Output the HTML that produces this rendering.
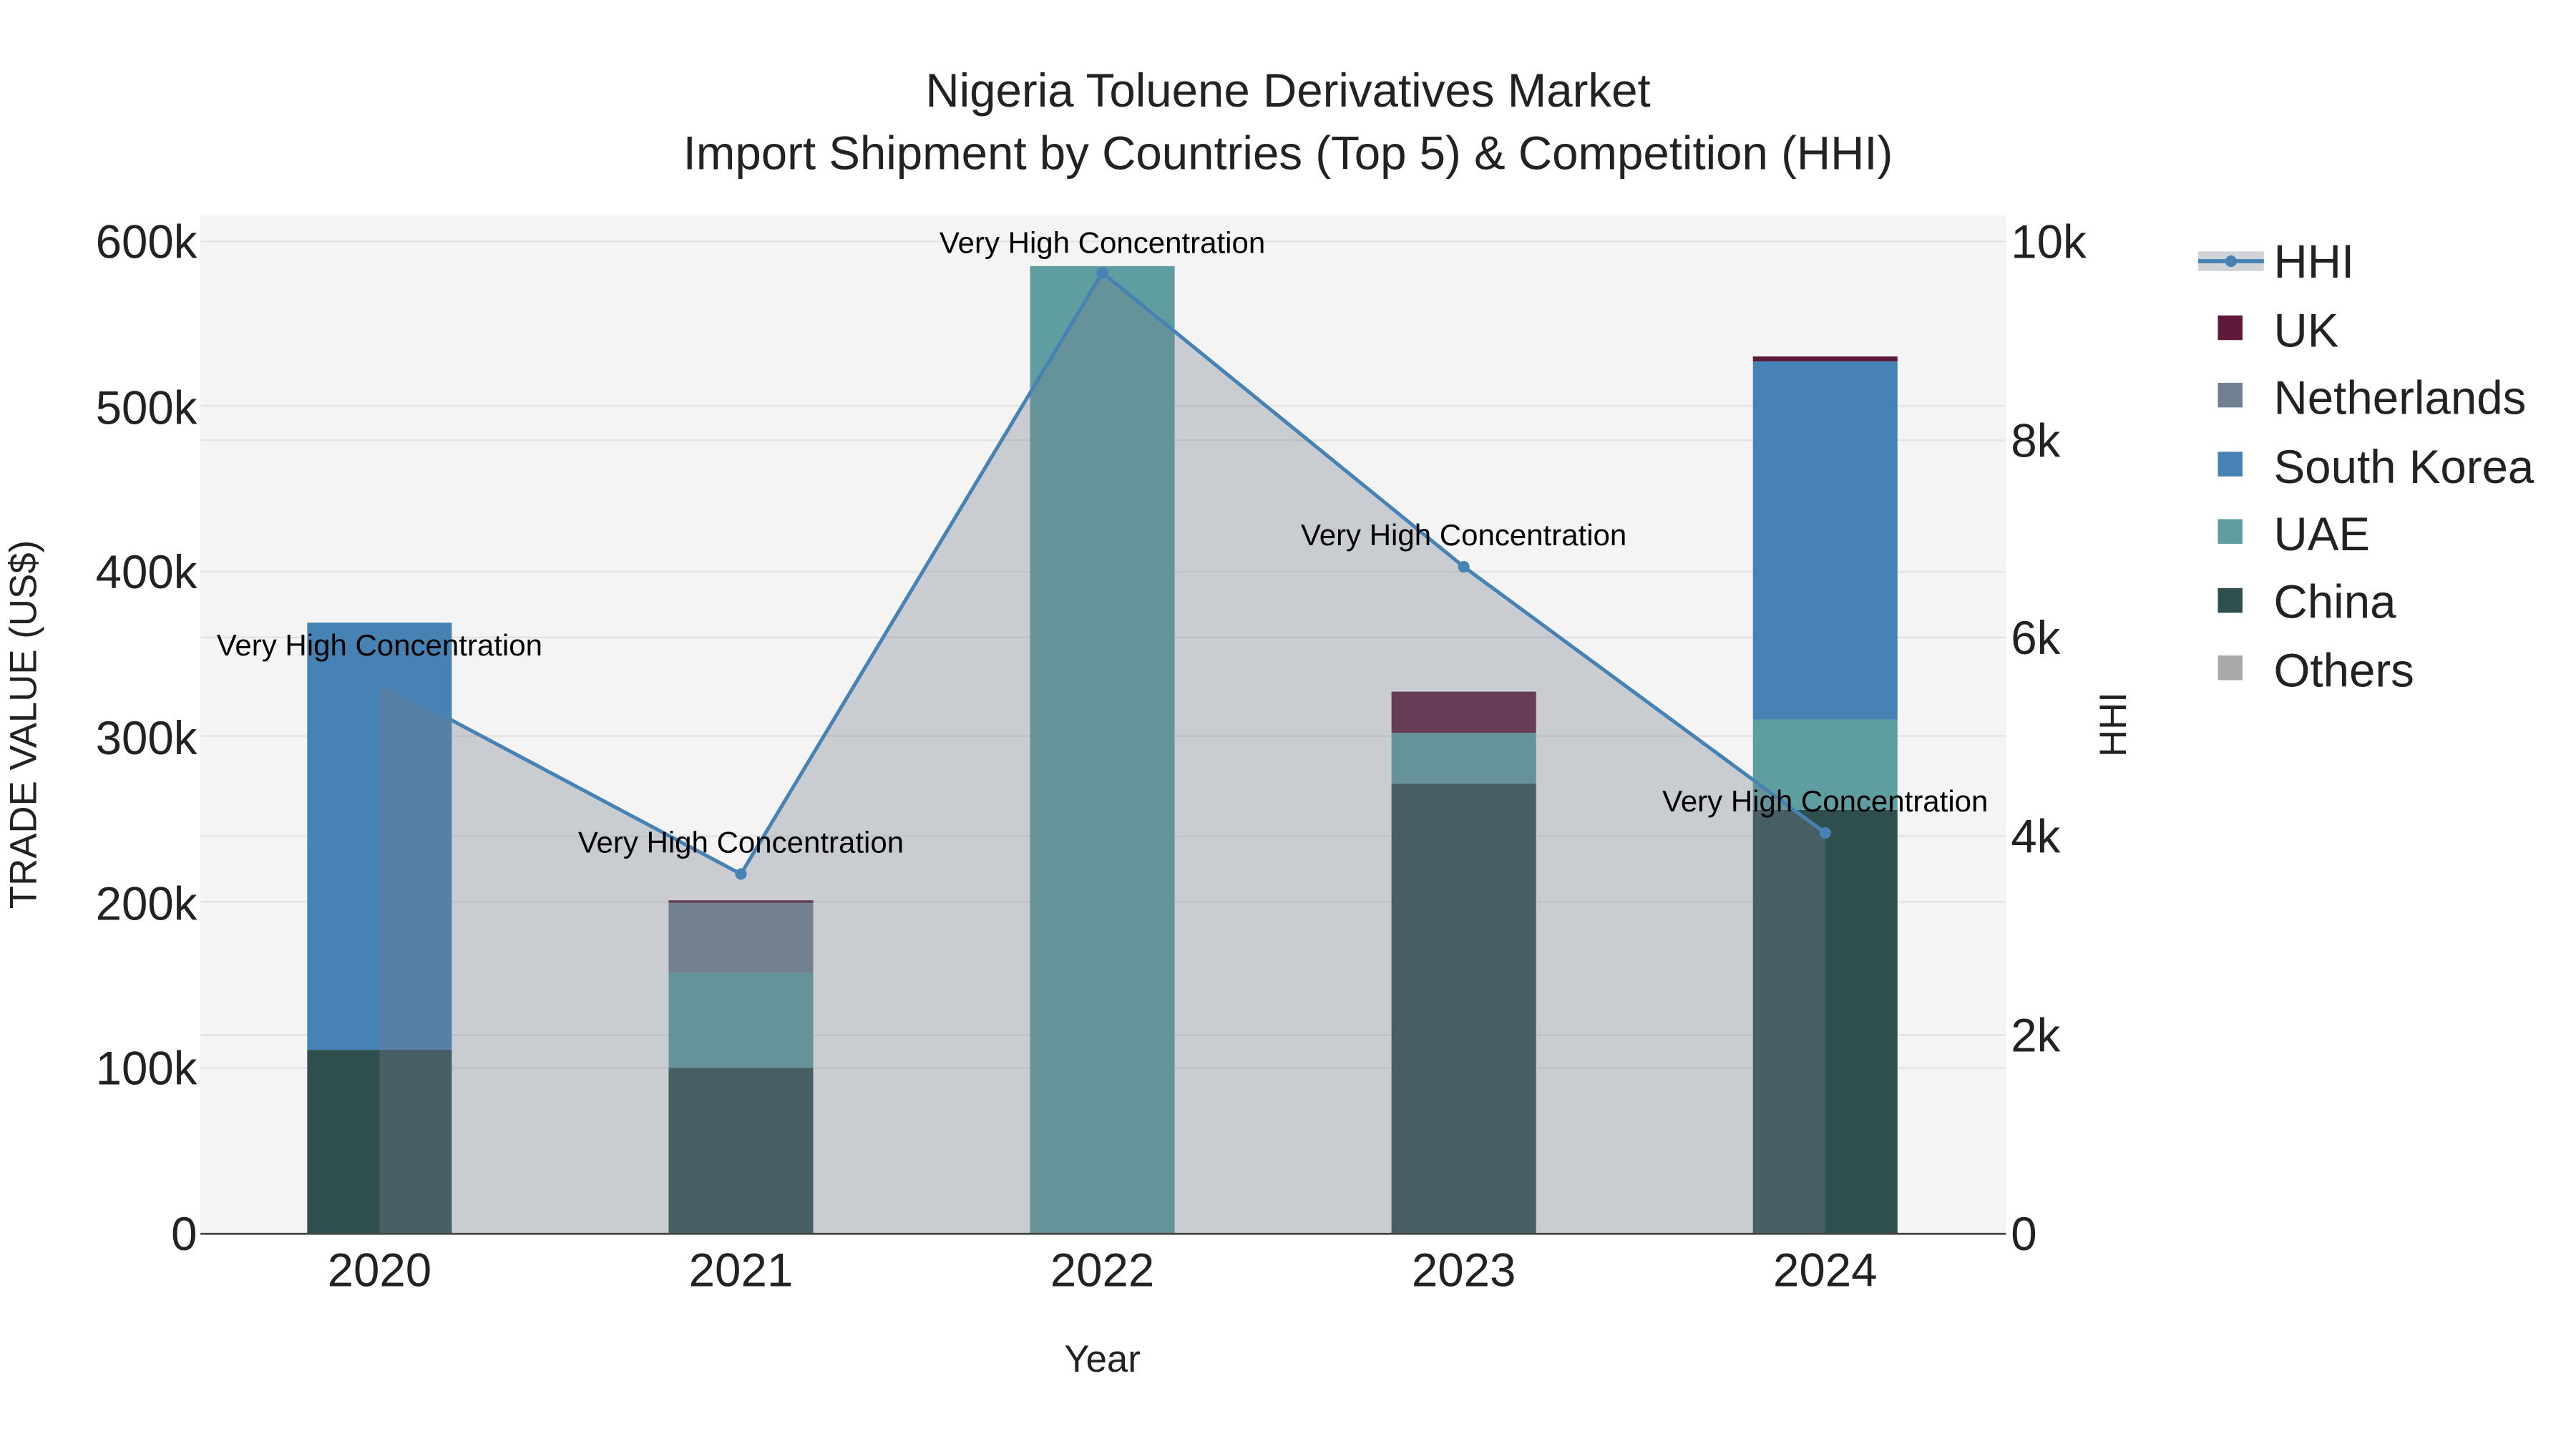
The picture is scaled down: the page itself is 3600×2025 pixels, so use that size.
<!DOCTYPE html>
<html><head><meta charset="utf-8"><style>
html,body{margin:0;padding:0;background:#fff;}
svg{display:block;}
text{font-family:"Liberation Sans",sans-serif;}
</style></head><body>
<svg width="3600" height="2025" viewBox="0 0 1568 882" xmlns="http://www.w3.org/2000/svg">
<rect width="1568" height="882" fill="#fff"/>
<rect x="122" y="131" width="1099" height="620" fill="#f4f4f4"/>
<g stroke="#e2e2e2" stroke-width="1">
<line x1="122" x2="1221" y1="650" y2="650"/><line x1="122" x2="1221" y1="549" y2="549"/>
<line x1="122" x2="1221" y1="448" y2="448"/><line x1="122" x2="1221" y1="348" y2="348"/>
<line x1="122" x2="1221" y1="247" y2="247"/><line x1="122" x2="1221" y1="147" y2="147"/>
<line x1="122" x2="1221" y1="630" y2="630"/><line x1="122" x2="1221" y1="509" y2="509"/>
<line x1="122" x2="1221" y1="388" y2="388"/><line x1="122" x2="1221" y1="268" y2="268"/>
</g>
<rect x="187" y="639" width="88" height="112" fill="#2f4f4f"/>
<rect x="187" y="379" width="88" height="260" fill="#4682b4"/>
<rect x="407" y="650" width="88" height="101" fill="#2f4f4f"/>
<rect x="407" y="592" width="88" height="58" fill="#5f9ea0"/>
<rect x="407" y="549" width="88" height="43" fill="#708090"/>
<rect x="407" y="548" width="88" height="1.5" fill="#5e1a3a"/>
<rect x="627" y="162" width="88" height="589" fill="#5f9ea0"/>
<rect x="847" y="477" width="88" height="274" fill="#2f4f4f"/>
<rect x="847" y="446" width="88" height="31" fill="#5f9ea0"/>
<rect x="847" y="421" width="88" height="25" fill="#5e1a3a"/>
<rect x="1067" y="493" width="88" height="258" fill="#2f4f4f"/>
<rect x="1067" y="438" width="88" height="55" fill="#5f9ea0"/>
<rect x="1067" y="220" width="88" height="218" fill="#4682b4"/>
<rect x="1067" y="217" width="88" height="3" fill="#5e1a3a"/>
<polygon points="231,751 231,415 451,532 671,166 891,345 1111,507 1111,751" fill="rgb(118,126,140)" fill-opacity="0.34"/>
<polyline points="231,415 451,532 671,166 891,345 1111,507" fill="none" stroke="#4682b4" stroke-width="2.2"/>
<g fill="#4682b4"><circle cx="231" cy="415" r="3.5"/><circle cx="451" cy="532" r="3.5"/><circle cx="671" cy="166" r="3.5"/><circle cx="891" cy="345" r="3.5"/><circle cx="1111" cy="507" r="3.5"/></g>
<line x1="122" x2="1221" y1="751" y2="751" stroke="#444" stroke-width="1.2"/>
<g font-size="18.3" fill="#000" text-anchor="middle">
<text x="231" y="399">Very High Concentration</text>
<text x="451" y="519">Very High Concentration</text>
<text x="671" y="154">Very High Concentration</text>
<text x="891" y="332">Very High Concentration</text>
<text x="1111" y="494">Very High Concentration</text>
</g>
<g font-size="28.5" fill="#222" text-anchor="end">
<text x="120" y="761">0</text><text x="120" y="660">100k</text><text x="120" y="560">200k</text>
<text x="120" y="459">300k</text><text x="120" y="358">400k</text><text x="120" y="258">500k</text><text x="120" y="157">600k</text>
</g>
<g font-size="28.5" fill="#222" text-anchor="start">
<text x="1224" y="761">0</text><text x="1224" y="640">2k</text><text x="1224" y="519">4k</text>
<text x="1224" y="398">6k</text><text x="1224" y="278">8k</text><text x="1224" y="157">10k</text>
</g>
<g font-size="28.5" fill="#222" text-anchor="middle">
<text x="231" y="783">2020</text><text x="451" y="783">2021</text><text x="671" y="783">2022</text><text x="891" y="783">2023</text><text x="1111" y="783">2024</text>
</g>
<text x="671" y="835" font-size="23" fill="#222" text-anchor="middle">Year</text>
<text transform="translate(22,441) rotate(-90)" font-size="23" fill="#222" text-anchor="middle">TRADE VALUE (US$)</text>
<text transform="translate(1294,441) rotate(-90)" font-size="23" fill="#222" text-anchor="middle">HHI</text>
<g font-size="28.5" fill="#222" text-anchor="middle">
<text x="784" y="65">Nigeria Toluene Derivatives Market</text>
<text x="784" y="103">Import Shipment by Countries (Top 5) &amp; Competition (HHI)</text>
</g>
<rect x="1338" y="153" width="40" height="12" fill="rgb(118,126,140)" fill-opacity="0.34"/>
<line x1="1338" x2="1378" y1="159" y2="159" stroke="#4682b4" stroke-width="2.5"/>
<circle cx="1358" cy="159" r="3.5" fill="#4682b4"/>
<rect x="1350" y="192" width="15" height="15" fill="#5e1a3a"/>
<rect x="1350" y="233" width="15" height="15" fill="#708090"/>
<rect x="1350" y="275" width="15" height="15" fill="#4682b4"/>
<rect x="1350" y="316" width="15" height="15" fill="#5f9ea0"/>
<rect x="1350" y="358" width="15" height="15" fill="#2f4f4f"/>
<rect x="1350" y="399" width="15" height="15" fill="#a9a9a9"/>
<g font-size="28.5" fill="#222">
<text x="1384" y="169">HHI</text><text x="1384" y="211">UK</text><text x="1384" y="252">Netherlands</text>
<text x="1384" y="294">South Korea</text><text x="1384" y="335">UAE</text><text x="1384" y="376">China</text><text x="1384" y="418">Others</text>
</g>
</svg>
</body></html>
